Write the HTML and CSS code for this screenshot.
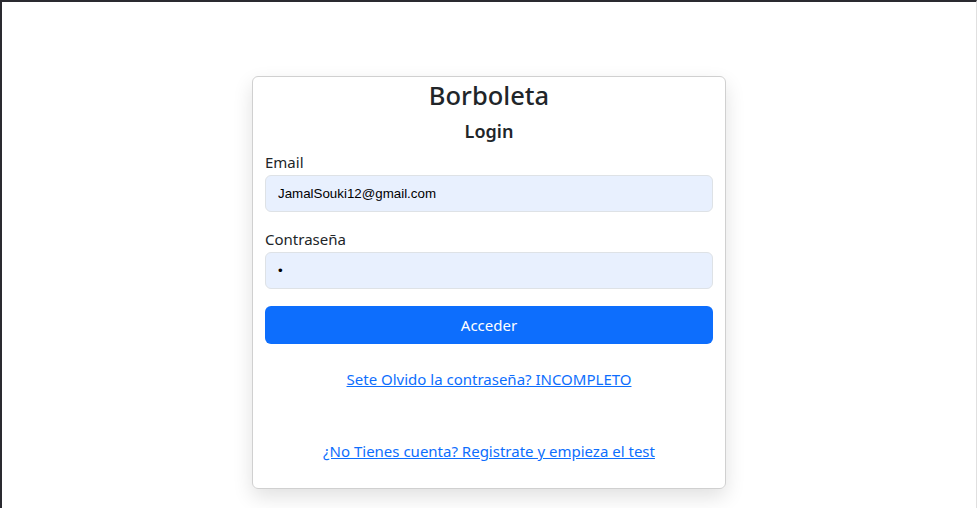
FILE: index.html
```html
<!DOCTYPE html>
<html lang="es">
<head>
<meta charset="utf-8">
<title>Borboleta - Login</title>
<link rel="stylesheet" href="styles.css">
</head>
<body>
<div class="frame">
  <div class="card">
    <h2 class="brand">Borboleta</h2>
    <h5 class="subtitle">Login</h5>
    <form class="form">
      <div class="field">
        <label class="label" for="email">Email</label>
        <input class="input" id="email" type="email" value="JamalSouki12@gmail.com">
      </div>
      <div class="field">
        <label class="label" for="pass">Contraseña</label>
        <input class="input" id="pass" type="password" value="a">
      </div>
      <button class="btn" type="button">Acceder</button>
    </form>
    <div class="links">
      <a class="link" href="#">Sete Olvido la contraseña? INCOMPLETO</a>
      <a class="link" href="#">¿No Tienes cuenta? Registrate y empieza el test</a>
    </div>
  </div>
</div>
</body>
</html>
```

FILE: styles.css
```css
html, body {
  margin: 0;
  padding: 0;
  height: 100%;
  background: #ffffff;
}
body {
  font-family: "Noto Sans", "Open Sans", sans-serif;
  font-size: 16px;
  color: #212529;
  overflow: hidden;
}
.frame {
  box-sizing: border-box;
  height: 508px;
  border-top: 2px solid #2a2a30;
  border-left: 2px solid #2a2a30;
  border-right: 1px solid #e0e0e0;
  padding-top: 74px;
  display: flex;
  justify-content: center;
}
.card {
  box-sizing: border-box;
  width: 474px;
  height: 413px;
  border: 1px solid #d0d0d0;
  border-radius: 6px;
  box-shadow: 0 8px 20px rgba(0, 0, 0, 0.12);
  padding: 0 12px;
  display: flex;
  flex-direction: column;
  align-self: flex-start;
}
.brand {
  margin: 0;
  text-align: center;
  font-size: 25.5px;
  font-weight: 500;
  line-height: 36px;
}
.subtitle {
  margin: 4px 0 0;
  text-align: center;
  font-size: 18px;
  font-weight: 600;
  line-height: 28px;
}
.form {
  display: flex;
  flex-direction: column;
  margin-top: 6px;
}
.field {
  display: flex;
  flex-direction: column;
  margin-bottom: 16px;
}
.label {
  font-size: 15px;
  line-height: 22px;
  margin-bottom: 2px;
}
.input {
  box-sizing: border-box;
  height: 37px;
  padding: 6px 12px;
  border: 1px solid #dee2e6;
  border-radius: 6px;
  background: #e8f0fe;
  font-family: "Liberation Sans", Arial, sans-serif;
  font-size: 13.33px;
  color: #000;
  outline: none;
}
.btn {
  height: 38px;
  margin-top: 1px;
  border: 0;
  border-radius: 6px;
  background: #0d6efd;
  color: #ffffff;
  font-family: "Noto Sans", "Open Sans", sans-serif;
  font-size: 15px;
}
.links {
  display: flex;
  flex-direction: column;
  align-items: center;
  margin-top: 23px;
  gap: 48px;
}
.link {
  color: #0d6efd;
  font-size: 15px;
  line-height: 24px;
  text-decoration: underline;
}
```
